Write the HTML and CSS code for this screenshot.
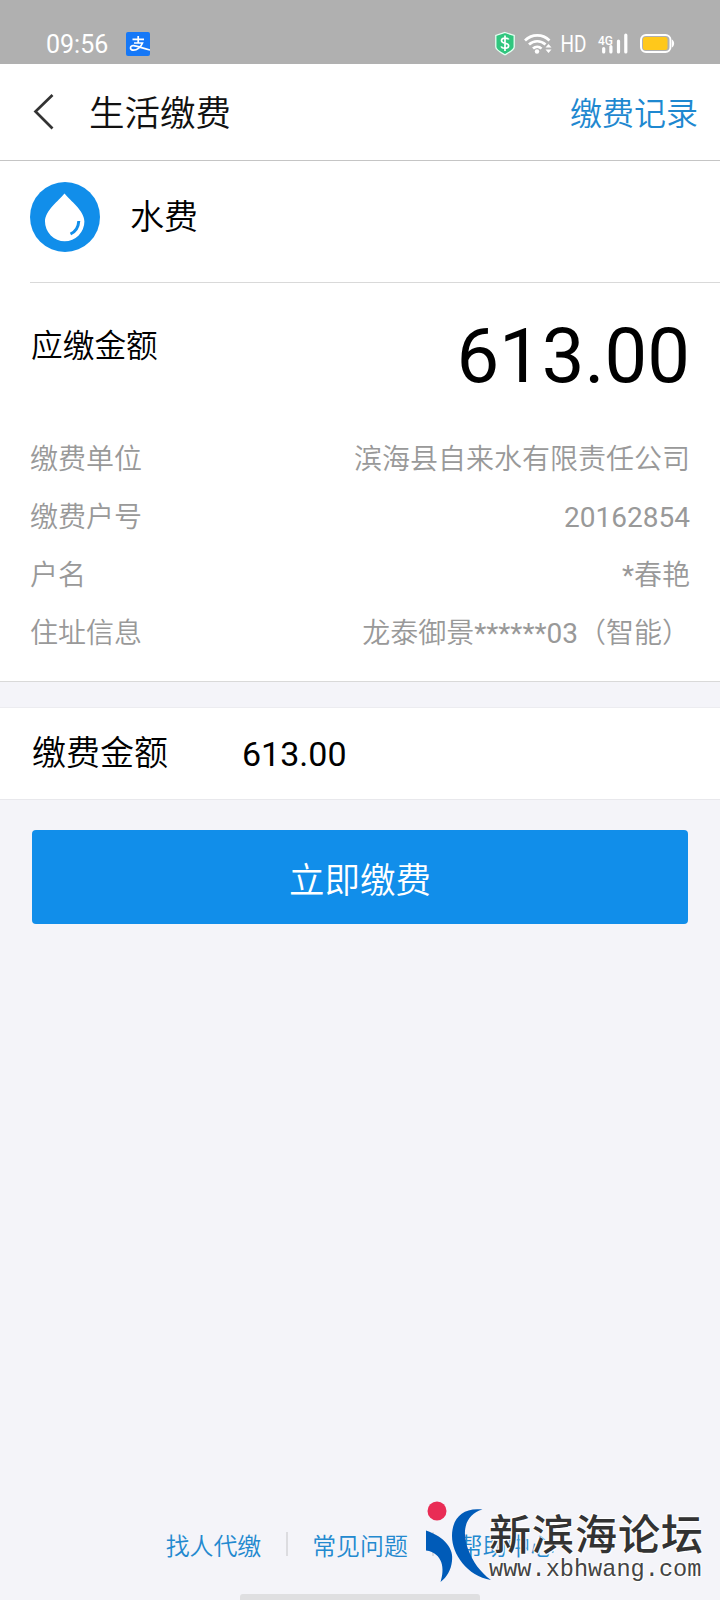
FILE: index.html
```html
<!DOCTYPE html>
<html lang="zh-CN">
<head>
<meta charset="utf-8">
<title>生活缴费</title>
<link rel="stylesheet" href="styles.css">
</head>
<body>
<div class="screen">
  <div class="status">
    <span class="clock">09:56</span>
    <svg class="alipay" width="24" height="24" viewBox="0 0 24 24"><rect width="24" height="24" rx="2" fill="#1678f7"/><path d="M6.500 7.400h11.500M12.200 4v7M8 11h8.500C15 15 11 18.200 7.500 18.200c-2 0-3-1-3-2.300 0-1.500 1.300-2.500 3.200-2.300C11 13.900 17 16.500 24 18" fill="none" stroke="#fff" stroke-width="1.700"/></svg>
    <svg class="indicators" width="182" height="26" viewBox="0 0 182 26">
      <path d="M11 1.500 20.200 4.500V16c0 3-5 5.500-9.200 7.800C6.800 21.500 1.800 19 1.800 16V4.500z" fill="#30c67e" stroke="#e5fff2" stroke-width="1.300"/>
      <path d="M14.700 8.500C14 6.900 7.400 6.200 7.500 9.800c.1 3.300 7.300 1.700 7.200 5-.1 3.500-6.900 2.900-7.500.6M11 4.500v15.500" fill="none" stroke="#fff" stroke-width="1.700"/>
      <g fill="none" stroke="#fff" stroke-width="2.700"><path d="M31 9.500c7-6.800 17.500-6.800 24.500 0M35 13.600c4.700-4.500 11.800-4.500 16.500 0M39 17.600c2.600-2.400 6-2.400 8.500 0"/></g>
      <circle cx="43" cy="20.500" r="2.200" fill="#fff"/>
      <path d="m51.500 16.500 3-3.500 3 3.500zM51.500 18.500l3 3.500 3-3.500z" fill="#fff"/>
      <text class="hd" x="66.500" y="20.800" textLength="26" lengthAdjust="spacingAndGlyphs">HD</text>
      <text class="fourg" x="104" y="13.500" textLength="15" lengthAdjust="spacingAndGlyphs">4G</text>
      <path d="M109.700 17.500v3.500M116.900 15.500v5.500M124.500 10v11M131.800 4v17" stroke="#fff" stroke-width="3.200" stroke-linecap="round"/>
      <rect x="147" y="4" width="29.500" height="17" rx="5" fill="none" stroke="#fff" stroke-width="2"/>
      <path d="M178 8.500v8c1.400-.8 2.100-2.300 2.100-4s-.7-3.200-2.100-4z" fill="#fff"/>
      <rect x="149" y="6" width="24.500" height="13" rx="2.500" fill="#ffc81b"/>
    </svg>
  </div>
  <header class="nav">
    <svg class="back" width="24" height="38" viewBox="0 0 24 38"><path d="M22.500 2 5.500 18.500 22.500 35.500" fill="none" stroke="#333" stroke-width="2.700"/></svg>
    <h1 class="title">生活缴费</h1>
    <a class="records">缴费记录</a>
  </header>
  <section class="bill">
    <div class="kind">
      <svg class="drop" width="70" height="70" viewBox="0 0 70 70"><circle cx="35" cy="35" r="35" fill="#118eea"/><path d="M34.500 11.500C29 18.500 15 28.500 15 39.500a19.700 19.700 0 0 0 39.400 0C54.400 28.500 40 18.500 34.500 11.500z" fill="#fff"/><path d="M48.800 39q-.6 9.500-8.300 13" fill="none" stroke="#118eea" stroke-width="3"/></svg>
      <span class="kind-name">水费</span>
    </div>
    <div class="due">
      <span class="due-label">应缴金额</span>
      <span class="due-value">613.00</span>
    </div>
    <dl class="details">
      <div class="row"><dt>缴费单位</dt><dd>滨海县自来水有限责任公司</dd></div>
      <div class="row"><dt>缴费户号</dt><dd><span class="latin">20162854</span></dd></div>
      <div class="row"><dt>户名</dt><dd><span class="latin">*</span>春艳</dd></div>
      <div class="row"><dt>住址信息</dt><dd>龙泰御景<span class="latin">******03</span>（智能）</dd></div>
    </dl>
  </section>
  <section class="amount">
    <span class="amount-label">缴费金额</span>
    <span class="amount-value">613.00</span>
  </section>
  <button class="pay">立即缴费</button>
  <footer class="links">
    <a>找人代缴</a><i class="sep"></i><a>常见问题</a><i class="sep"></i><a>帮助中心</a>
  </footer>
  <div class="home-bar"></div>
  <div class="watermark">
    <svg class="wm-logo" width="68" height="84" viewBox="0 0 68 84"><circle cx="12" cy="11" r="9.500" fill="#e92c55"/><path d="M1 30.500C20 37 29 49 27 61c-1 9-5 16-11.500 21C20 69 18 53 1 50.500z" fill="#005bb8"/><path d="M57.500 9.500C41 14 36 30 43 49c5 13 12 23 23 31C42 76 27 54 27 36 27 18 38 7 57.500 9.500z" fill="#005bb8"/></svg>
    <div class="wm-text">
      <span class="wm-name">新滨海论坛</span>
      <span class="wm-url">www.xbhwang.com</span>
    </div>
  </div>
</div>
</body>
</html>
```
FILE: styles.css
```css
* { box-sizing: border-box; }
body { margin: 0; }
.screen {
  position: relative;
  width: 720px;
  height: 1600px;
  overflow: hidden;
  display: flex;
  flex-direction: column;
  background: #f4f4f9;
  color: #000;
  font-family: Roboto, "Noto Sans CJK SC", sans-serif;
  font-weight: 350;
}
.status {
  height: 64px;
  padding: 24px 38px 0 46px;
  display: flex;
  align-items: center;
  background: #b0b0b0;
  color: #fff;
}
.clock { width: 80px; padding-top: 2px; font-size: 25px; line-height: 38px; font-weight: 400; }
.alipay { display: block; }
.indicators { display: block; margin-left: auto; margin-right: 6px; }
.hd { font: 400 23px Roboto, sans-serif; fill: #fff; }
.fourg { font: 500 13px Roboto, sans-serif; fill: #fff; }
.nav {
  height: 97px;
  padding: 0 22px 0 30px;
  display: flex;
  align-items: center;
  background: #fff;
  border-bottom: 1px solid #c5c5c5;
}
.title { margin: 0 0 0 35px; padding-top: 3px; font-size: 35.500px; font-weight: inherit; line-height: 52px; color: #111; }
.records { margin-left: auto; padding-top: 4px; font-size: 32px; line-height: 46px; color: #1e88d0; }
.bill { height: 521px; background: #fff; border-bottom: 1px solid #d9d9d9; }
.kind {
  height: 122px;
  margin-left: 30px;
  padding-top: 21px;
  display: flex;
  align-items: flex-start;
  border-bottom: 1px solid #d9d9d9;
}
.kind-name { margin-left: 30px; font-size: 34px; line-height: 70px; }
.due {
  height: 146px;
  padding: 26px 30px 0 31px;
  display: flex;
  justify-content: space-between;
}
.due-label { font-size: 31.700px; line-height: 75px; }
.due-value { font-size: 76px; line-height: 95px; font-weight: 400; }
.details {
  margin: 0;
  padding: 2px 30px 0;
  font-size: 28px;
  line-height: 58px;
  color: #999;
}
.row { height: 58px; display: flex; justify-content: space-between; }
.row dd { margin: 0; }
.latin { font-weight: 400; }
.amount {
  height: 93px;
  margin-top: 25px;
  padding: 0 32px;
  display: flex;
  align-items: center;
  background: #fff;
  border-top: 1px solid #ececf0;
  border-bottom: 1px solid #e8e8ec;
  font-size: 34px;
}
.amount-label { padding-bottom: 7px; }
.amount-value { margin-left: 74px; font-weight: 400; }
.pay {
  height: 94px;
  margin: 30px 32px 0;
  padding: 0;
  border: 0;
  border-radius: 4px;
  background: #118eea;
  color: #fff;
  font: inherit;
  font-size: 35.500px;
}
.links {
  margin: auto 0 26px;
  height: 48px;
  display: flex;
  justify-content: center;
  align-items: center;
  gap: 24.500px;
  font-size: 23.900px;
  color: #2389cf;
}
.sep { width: 2px; height: 24px; background: #dcdce0; }
.home-bar {
  width: 240px;
  height: 6px;
  margin: 0 auto;
  border-radius: 3px 3px 0 0;
  background: #dfdfe1;
}
.watermark {
  position: absolute;
  left: 425px;
  top: 1500px;
  display: flex;
}
.wm-logo { flex: none; }
.wm-text {
  margin-left: -4px;
  padding-top: 12px;
  display: flex;
  flex-direction: column;
  color: #333;
  text-shadow: 0 0 2px #fff, 0 0 2px #fff, 0 0 3px #fff, 1px 1px 1px #fff, -1px -1px 1px #fff;
}
.wm-name { font-size: 42px; letter-spacing: 1px; line-height: 48px; font-weight: 500; white-space: nowrap; }
.wm-url { font: 400 23.600px/19px "Liberation Mono", monospace; color: #444; }
```
